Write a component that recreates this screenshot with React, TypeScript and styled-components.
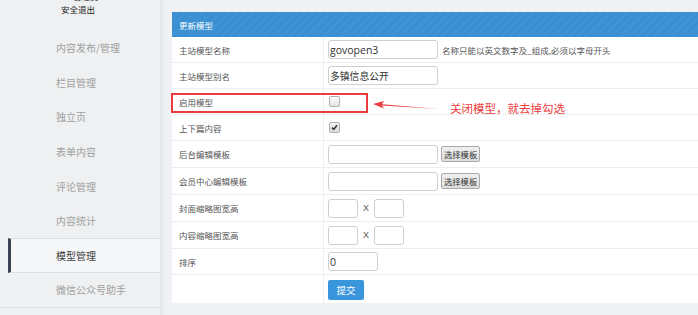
import React from 'react';
import styled, { createGlobalStyle } from 'styled-components';

const GlobalStyle = createGlobalStyle`
  html, body {
    margin: 0;
    padding: 0;
    overflow: hidden;
    font-family: "Noto Sans CJK SC", "Noto Sans", sans-serif;
  }
`;

const Layout = styled.div`
  display: flex;
  width: 698px;
  height: 315px;
  overflow: hidden;
`;

const Sidebar = styled.aside`
  width: 160px;
  flex-shrink: 0;
  background: #eef0f1;
  border-right: 3px solid #e6e8eb;
  display: flex;
  flex-direction: column;
`;

const UserBox = styled.div`
  height: 40px;
  flex-shrink: 0;
  padding-left: 61px;
  font-size: 8.5px;
  color: #222;
  margin-top: -10px;
`;

const UserName = styled.div`
  padding-left: 12px;
  line-height: 12px;
  color: #333;
`;

const Logout = styled.div`
  line-height: 14px;
`;

const Menu = styled.ul`
  list-style: none;
  margin: 0;
  padding: 0;
`;

const MenuItem = styled.li<{ $active?: boolean; $last?: boolean }>`
  height: 34.7px;
  box-sizing: border-box;
  display: flex;
  align-items: center;
  font-size: 10px;
  color: ${p => (p.$active ? '#3c3c3c' : '#a0a0a0')};
  padding-left: ${p => (p.$active ? '45px' : '56px')};
  margin-left: ${p => (p.$active ? '8px' : '0')};
  background: ${p => (p.$active ? '#f6f7f8' : 'transparent')};
  border-left: ${p => (p.$active ? '3px solid #3a4254' : 'none')};
  border-top: ${p => (p.$active ? '1px solid #dcdfe2' : 'none')};
  border-bottom: ${p =>
    p.$active ? '1px solid #dcdfe2' : p.$last ? '1px solid #dcdfe2' : 'none'};
`;

const Main = styled.main`
  flex: 1;
  background: #f0f1f4;
  padding: 12px 0 0 9px;
  border-top: 2px solid #f6f7f9;
  margin-top: -2px;
`;

const Panel = styled.section`
  background: #fff;
`;

const PanelHeader = styled.div`
  height: 25px;
  display: flex;
  align-items: center;
  padding-left: 7px;
  font-size: 8.5px;
  color: #fff;
  background: repeating-linear-gradient(
    135deg,
    #3a8fd0 0px,
    #3a8fd0 3px,
    #3e93d4 3px,
    #3e93d4 6px
  );
`;

const Row = styled.div<{ $h: number; $last?: boolean }>`
  position: relative;
  display: grid;
  grid-template-columns: 152px 1fr;
  height: ${p => p.$h}px;
  box-sizing: border-box;
  border-bottom: ${p => (p.$last ? 'none' : '1px solid #eeeeee')};
`;

const Label = styled.div`
  display: flex;
  align-items: center;
  padding-left: 7px;
  font-size: 8.5px;
  color: #555;
  border-right: 1px solid #eeeeee;
`;

const Field = styled.div`
  display: flex;
  align-items: center;
  gap: 4px;
  padding-left: 4px;
`;

const TextInput = styled.div<{ $w: number }>`
  width: ${p => p.$w}px;
  height: 19px;
  box-sizing: border-box;
  border: 1px solid #cfcfcf;
  border-radius: 3px;
  padding-left: 1px;
  display: flex;
  align-items: center;
  font-family: "Open Sans", "Noto Sans CJK SC", sans-serif;
  font-size: 10.5px;
  color: #333;
`;

const CnValue = styled.span`
  font-family: "Noto Sans CJK SC", sans-serif;
  font-size: 9.8px;
`;

const Hint = styled.span`
  font-size: 8.5px;
  color: #555;
`;

const Times = styled.span`
  font-family: "Liberation Sans", sans-serif;
  font-size: 9px;
  color: #555;
  margin: 0 1px;
`;

const PickButton = styled.button`
  height: 16px;
  padding: 0 2px;
  margin-left: -1px;
  border: 1px solid #a9a9a9;
  border-radius: 2px;
  background: linear-gradient(#f0f0f0, #dddddd);
  font-family: "Noto Sans CJK SC", sans-serif;
  font-size: 8.3px;
  color: #333;
  line-height: 14px;
`;

const Check = styled.span<{ $checked?: boolean }>`
  width: 9px;
  height: 9px;
  margin-left: 1px;
  border: 1px solid #b0b0b0;
  border-radius: 2px;
  background: ${p =>
    p.$checked ? 'linear-gradient(#f4f4f4, #dcdcdc)' : 'linear-gradient(#fdfdfd, #e4e4e4)'};
  display: flex;
  align-items: center;
  justify-content: center;
`;

const SubmitButton = styled.button`
  width: 36px;
  height: 20px;
  border: none;
  border-radius: 2px;
  background: #3a96dc;
  color: #fff;
  font-family: "Noto Sans CJK SC", sans-serif;
  font-size: 9.5px;
  margin-top: 1px;
`;

const Highlight = styled.div`
  position: absolute;
  left: -1px;
  top: 4px;
  width: 197px;
  height: 20px;
  box-sizing: border-box;
  border: 2px solid #ea3c40;
  pointer-events: none;
`;

const Arrow = styled.svg`
  position: absolute;
  left: 201px;
  top: 12px;
`;

const Note = styled.span`
  position: absolute;
  left: 278px;
  top: 11px;
  font-size: 11.5px;
  line-height: 16px;
  color: #ea3c40;
  white-space: nowrap;
`;

const menu = [
  '内容发布/管理',
  '栏目管理',
  '独立页',
  '表单内容',
  '评论管理',
  '内容统计',
  '模型管理',
  '微信公众号助手',
];

const CheckMark = () => (
  <svg width="7" height="7" viewBox="0 0 7 7">
    <path d="M1 3.6 L2.8 5.4 L6 1.2" fill="none" stroke="#333" strokeWidth="1.6" />
  </svg>
);

const App: React.FC = () => (
  <>
    <GlobalStyle />
    <Layout>
      <Sidebar>
        <UserBox>
          <UserName>管理员 admin</UserName>
          <Logout>安全退出</Logout>
        </UserBox>
        <Menu>
          {menu.map((m, i) => (
            <MenuItem key={m} $active={m === '模型管理'} $last={i === menu.length - 1}>
              {m}
            </MenuItem>
          ))}
        </Menu>
      </Sidebar>
      <Main>
        <Panel>
          <PanelHeader>更新模型</PanelHeader>
          <Row $h={26}>
            <Label>主站模型名称</Label>
            <Field>
              <TextInput $w={110}>govopen3</TextInput>
              <Hint>名称只能以英文数字及_组成,必须以字母开头</Hint>
            </Field>
          </Row>
          <Row $h={26}>
            <Label>主站模型别名</Label>
            <Field>
              <TextInput $w={110}>
                <CnValue>多镇信息公开</CnValue>
              </TextInput>
            </Field>
          </Row>
          <Row $h={26}>
            <Label>启用模型</Label>
            <Field>
              <Check />
            </Field>
            <Highlight />
            <Arrow width="66" height="10" viewBox="0 0 66 10">
              <path d="M0 3 L11 0 L9 3.2 L66 8 L9 4.6 L11 7.5 Z" fill="#ea3c40" />
            </Arrow>
            <Note>关闭模型，就去掉勾选</Note>
          </Row>
          <Row $h={26}>
            <Label>上下篇内容</Label>
            <Field>
              <Check $checked>
                <CheckMark />
              </Check>
            </Field>
          </Row>
          <Row $h={27}>
            <Label>后台编辑模板</Label>
            <Field>
              <TextInput $w={110} />
              <PickButton>选择模板</PickButton>
            </Field>
          </Row>
          <Row $h={27}>
            <Label>会员中心编辑模板</Label>
            <Field>
              <TextInput $w={110} />
              <PickButton>选择模板</PickButton>
            </Field>
          </Row>
          <Row $h={27}>
            <Label>封面缩略图宽高</Label>
            <Field>
              <TextInput $w={30} />
              <Times>X</Times>
              <TextInput $w={30} />
            </Field>
          </Row>
          <Row $h={27}>
            <Label>内容缩略图宽高</Label>
            <Field>
              <TextInput $w={30} />
              <Times>X</Times>
              <TextInput $w={30} />
            </Field>
          </Row>
          <Row $h={26}>
            <Label>排序</Label>
            <Field>
              <TextInput $w={50}>0</TextInput>
            </Field>
          </Row>
          <Row $h={28} $last>
            <Label />
            <Field>
              <SubmitButton>提交</SubmitButton>
            </Field>
          </Row>
        </Panel>
      </Main>
    </Layout>
  </>
);

export default App;
